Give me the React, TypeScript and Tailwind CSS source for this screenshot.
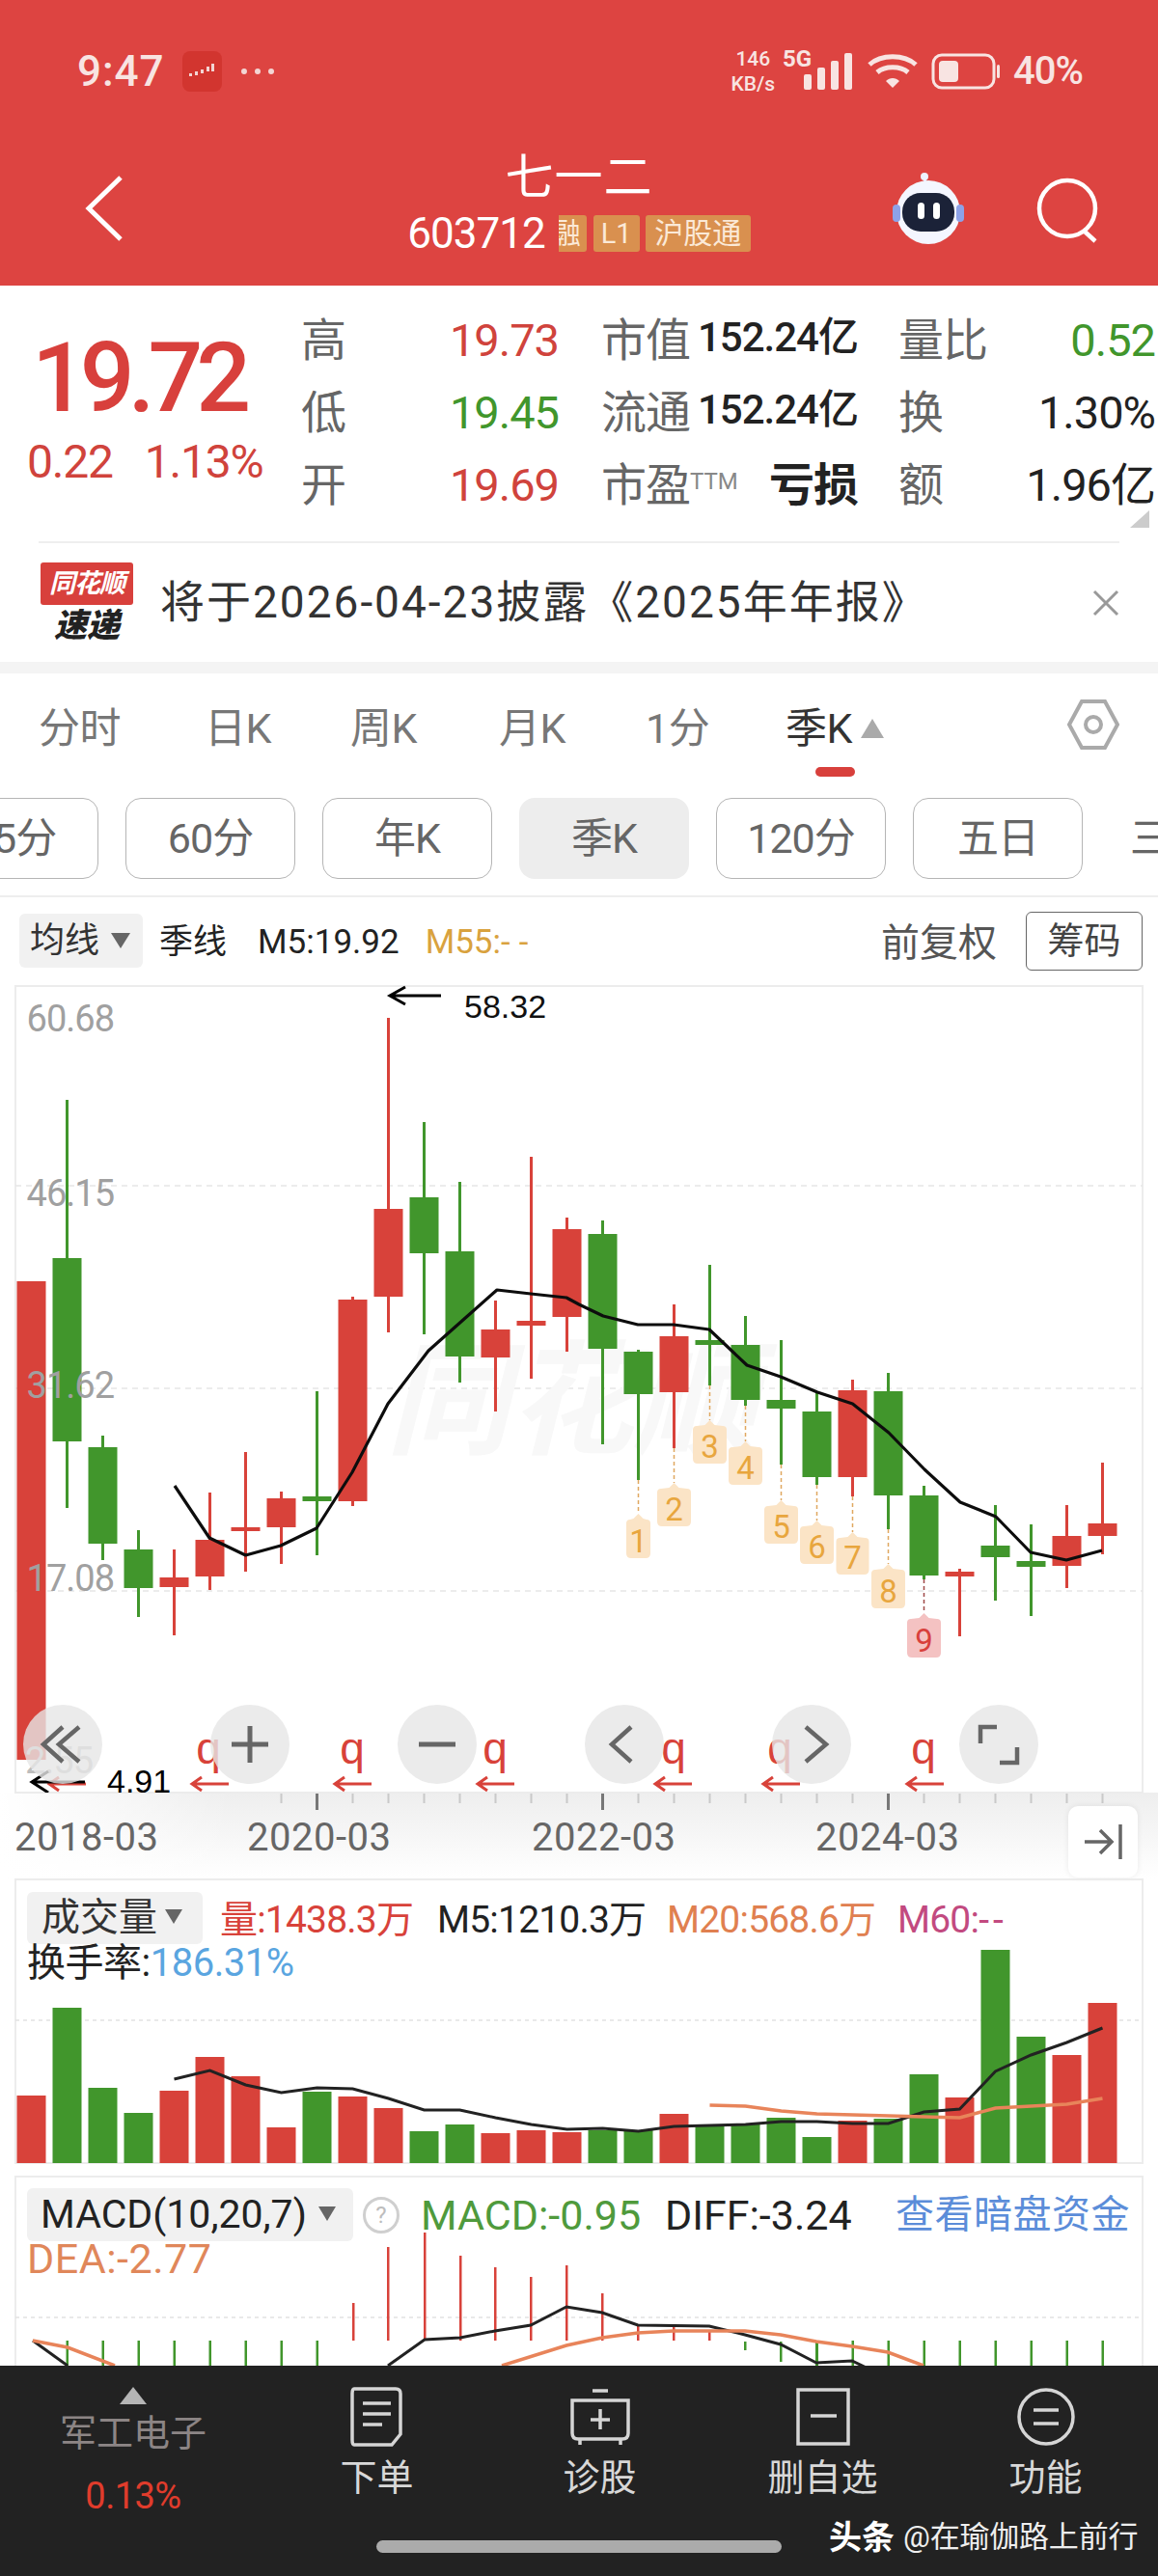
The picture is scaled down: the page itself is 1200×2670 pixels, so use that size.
import React from 'react';

const FONT = "Roboto, 'Noto Sans CJK SC', sans-serif";
const RED = '#d8423a';
const GREEN = '#41962c';

const cx = (i: number) => 32.5 + 37 * i;

// [wickTop, bodyTop, bodyBottom, wickBottom, 'r' | 'g']
const candles: [number, number, number, number, string][] = [
  [1328, 1328, 1824, 1824, 'r'],
  [1140, 1304, 1494, 1563, 'g'],
  [1488, 1500, 1600, 1617, 'g'],
  [1586, 1606, 1646, 1676, 'g'],
  [1606, 1635, 1645, 1695, 'r'],
  [1547, 1596, 1634, 1648, 'r'],
  [1505, 1583, 1587, 1629, 'r'],
  [1546, 1553, 1583, 1621, 'r'],
  [1442, 1551, 1556, 1612, 'g'],
  [1344, 1347, 1556, 1561, 'r'],
  [1055, 1253, 1344, 1381, 'r'],
  [1163, 1241, 1299, 1383, 'g'],
  [1225, 1297, 1406, 1433, 'g'],
  [1348, 1378, 1407, 1463, 'r'],
  [1199, 1369, 1374, 1429, 'r'],
  [1262, 1274, 1365, 1401, 'r'],
  [1265, 1279, 1398, 1497, 'g'],
  [1399, 1401, 1445, 1534, 'g'],
  [1352, 1385, 1443, 1501, 'r'],
  [1311, 1389, 1394, 1436, 'g'],
  [1364, 1394, 1451, 1457, 'g'],
  [1389, 1451, 1460, 1518, 'g'],
  [1443, 1463, 1531, 1539, 'g'],
  [1430, 1441, 1531, 1551, 'r'],
  [1423, 1442, 1550, 1585, 'g'],
  [1540, 1550, 1633, 1637, 'g'],
  [1626, 1629, 1634, 1696, 'r'],
  [1560, 1602, 1614, 1659, 'g'],
  [1580, 1618, 1624, 1675, 'g'],
  [1560, 1592, 1623, 1646, 'r'],
  [1516, 1579, 1592, 1611, 'r'],
];

const maLine =
  '181,1540 217,1594 254.5,1612 291,1602 328,1584 365,1526 402,1455 444,1400 480,1368 515,1337 550,1341 587,1345 600,1352 625,1364 661,1373 698,1373 735,1378 774,1415 809,1427 847,1443 883.5,1455 921,1485 958,1523 995,1557 1032,1572 1068,1609 1105,1617 1142,1607';

// [center x, peak y, bottom y, width, wick bottom, label]
const markers: [number, number, number, number, number, string][] = [
  [661.5, 1569, 1615, 25, 1534, '1'],
  [698.5, 1537, 1582, 35, 1501, '2'],
  [735.5, 1472, 1517, 35, 1436, '3'],
  [772.5, 1494, 1539, 35, 1457, '4'],
  [809.5, 1555, 1600, 35, 1518, '5'],
  [846.5, 1576, 1621, 35, 1539, '6'],
  [883.5, 1588, 1632, 34, 1551, '7'],
  [920.5, 1621, 1667, 35, 1585, '8'],
  [957.5, 1672, 1718, 35, 1637, '9'],
];

const qArrows: [number, number][] = [
  [216, 198],
  [365, 346],
  [513, 494],
  [698, 678],
  [808, 790],
  [957, 939],
];

const volumes: [number, string][] = [
  [2172, 'r'], [2081, 'g'], [2164, 'g'], [2190, 'g'], [2167, 'r'], [2132, 'r'], [2152, 'r'], [2205, 'r'],
  [2168, 'g'], [2173, 'r'], [2185, 'r'], [2209, 'g'], [2202, 'g'], [2211, 'r'], [2208, 'r'], [2210, 'r'],
  [2208, 'g'], [2208, 'g'], [2191, 'r'], [2203, 'g'], [2202, 'g'], [2195, 'g'], [2215, 'g'], [2198, 'r'],
  [2196, 'g'], [2150, 'g'], [2174, 'r'], [2021, 'g'], [2111, 'g'], [2130, 'r'], [2076, 'r'],
];

const volM5 = [
  2155, 2146, 2161, 2169, 2164, 2165, 2175, 2187, 2187, 2195, 2202, 2207, 2206, 2209, 2204, 2203, 2202, 2199,
  2199, 2201, 2201, 2189, 2186, 2147, 2130, 2117, 2102,
];
const volM20 = [2182, 2183, 2188, 2191, 2192, 2193, 2194, 2195, 2185, 2183, 2181, 2175];

const macdBars: [number, number, string][] = [
  [366, 2387, 'r'], [402, 2329, 'r'], [440, 2314, 'r'], [477, 2338, 'r'], [513, 2350, 'r'], [550, 2360, 'r'],
  [587, 2348, 'r'], [624, 2377, 'r'], [661, 2410, 'r'], [698, 2410, 'r'], [735, 2415, 'r'],
];

const Tab = ({ label, active }: { label: string; active?: boolean }) => (
  <span className={active ? 'text-[#333]' : 'text-[#777]'}>{label}</span>
);

const PeriodBtn = ({ label, active }: { label: string; active?: boolean }) => (
  <div
    className={
      'w-[176px] h-[84px] shrink-0 rounded-[16px] flex items-center justify-center text-[43px] tracking-[-1px] text-[#666] ' +
      (active ? 'bg-[#ededed]' : 'border border-[#b5b5b5]')
    }
  >
    {label}
  </div>
);

const RoundBtn = ({ left, children }: { left: string; children: React.ReactNode }) => (
  <div className={'absolute top-0 w-[82px] h-[82px] rounded-full bg-[#e6e6e6]/80 ' + left}>
    <svg width="82" height="82" viewBox="0 0 82 82" fill="none" stroke="#666" strokeWidth="4.5">
      {children}
    </svg>
  </div>
);

const NavItem = ({ label, children }: { label: string; children: React.ReactNode }) => (
  <div className="w-[231px] flex flex-col items-center">
    <svg width="70" height="62" viewBox="0 0 70 62" fill="none" stroke="#d5d5d5" strokeWidth="3.5">
      {children}
    </svg>
    <span className="mt-[8px] text-[38px] leading-[48px] text-[#d8d8d8]">{label}</span>
  </div>
);

export default function App() {
  return (
    <div className="relative w-[1200px] h-[2670px] overflow-hidden bg-white" style={{ fontFamily: FONT }}>
      {/* header */}
      <header className="relative h-[296px] bg-[#dd4441] text-white">
        <div className="flex items-center h-[148px] pl-[80px] pr-[78px]">
          <span className="text-[44px] tracking-[1px] font-medium text-[#f8e4e2]">9:47</span>
          <div className="ml-[18px] w-[41px] h-[42px] rounded-[8px] bg-[#d2352f] flex items-center justify-center">
            <svg width="28" height="16" viewBox="0 0 28 16" fill="#f3d5d3">
              <rect x="1" y="10" width="3" height="3" />
              <rect x="7" y="8" width="3" height="4" />
              <rect x="13" y="6" width="3" height="4" />
              <rect x="19" y="3" width="3" height="5" />
              <rect x="24" y="0" width="3" height="8" />
            </svg>
          </div>
          <div className="ml-[20px] flex gap-[8px]">
            <div className="w-[6px] h-[6px] rounded-full bg-[#f3d5d3]" />
            <div className="w-[6px] h-[6px] rounded-full bg-[#f3d5d3]" />
            <div className="w-[6px] h-[6px] rounded-full bg-[#f3d5d3]" />
          </div>
          <div className="ml-auto flex items-center">
            <div className="flex flex-col items-center text-[21px] leading-[26px] font-medium text-[#f8e4e2]">
              <span>146</span>
              <span>KB/s</span>
            </div>
            <div className="relative w-[62px] h-[48px] ml-[8px]">
              <span className="absolute left-0 top-[-7px] text-[24px] font-bold text-[#f8e4e2]">5G</span>
            </div>
            <svg width="50" height="38" viewBox="0 0 50 38" fill="#f8e4e2" className="ml-[-40px]">
              <rect x="0" y="22" width="8" height="16" rx="2" />
              <rect x="14" y="15" width="8" height="23" rx="2" />
              <rect x="28" y="8" width="8" height="30" rx="2" />
              <rect x="42" y="0" width="8" height="38" rx="2" />
            </svg>
            <svg width="54" height="38" viewBox="0 0 54 38" fill="none" stroke="#f8e4e2" strokeWidth="5" className="ml-[15px]">
              <path d="M3 12 C15 1 39 1 51 12" />
              <path d="M11 20 C19 13 35 13 43 20" />
              <path d="M20 29 L27 36 L34 29 C30 25 24 25 20 29 Z" fill="#f8e4e2" stroke="none" />
            </svg>
            <svg width="72" height="38" viewBox="0 0 72 38" fill="none" className="ml-[13px]">
              <rect x="2" y="2" width="63" height="34" rx="9" stroke="#f8e4e2" strokeWidth="3" />
              <rect x="8" y="8" width="20" height="22" rx="4" fill="#f8e4e2" />
              <rect x="68" y="12" width="3" height="14" rx="1.5" fill="#f8e4e2" />
            </svg>
            <span className="ml-[13px] text-[40px] font-medium tracking-[-1px] text-[#f8e4e2]">40%</span>
          </div>
        </div>
        <div className="absolute left-[88px] top-[182px]">
          <svg width="40" height="68" viewBox="0 0 40 68" fill="none" stroke="#fff" strokeWidth="5">
            <path d="M37 2 L4 34 L37 66" />
          </svg>
        </div>
        <div className="flex flex-col items-center mt-[1px]">
          <span className="text-[50px] leading-[70px] tracking-[1px]">七一二</span>
          <div className="flex items-center mt-[3px] h-[40px]">
            <span className="text-[44px] tracking-[-1px] mr-[14px]">603712</span>
            <div className="w-[29px] h-[38px] overflow-hidden bg-[#d9904f] rounded-r-[3px] flex justify-end">
              <span className="text-[30px] leading-[38px] text-[#fbe9d7] shrink-0 mr-[6px]">融</span>
            </div>
            <div className="ml-[7px] w-[48px] h-[38px] bg-[#d9904f] rounded-[3px] text-center text-[29px] leading-[38px] text-[#fbe9d7]">
              L1
            </div>
            <div className="ml-[6px] w-[109px] h-[38px] bg-[#d9904f] rounded-[3px] text-center text-[30px] leading-[38px] text-[#fbe9d7]">
              沪股通
            </div>
          </div>
        </div>
        <svg className="absolute left-[922px] top-[178px]" width="80" height="76" viewBox="0 0 80 76">
          <line x1="36" y1="6" x2="38" y2="16" stroke="#dfe7ff" strokeWidth="3" />
          <circle cx="36" cy="5" r="4" fill="#eef2ff" />
          <circle cx="40" cy="42" r="33" fill="#f4f6ff" />
          <rect x="3" y="34" width="8" height="18" rx="4" fill="#8da2e8" />
          <rect x="69" y="34" width="8" height="18" rx="4" fill="#8da2e8" />
          <rect x="13" y="22" width="54" height="40" rx="19" fill="#1b2238" />
          <rect x="29" y="32" width="7" height="17" rx="3.5" fill="#fff" />
          <rect x="45" y="32" width="7" height="17" rx="3.5" fill="#fff" />
        </svg>
        <svg className="absolute left-[1073px] top-[184px]" width="70" height="68" viewBox="0 0 70 68" fill="none" stroke="#fff" strokeWidth="4.5">
          <circle cx="33" cy="32" r="29" />
          <path d="M50 55 L62 66" />
        </svg>
      </header>

      {/* quote */}
      <section className="relative h-[267px]">
        <div className="absolute left-[33px] top-[46px] text-[100px] leading-[100px] font-medium tracking-[-7px] text-[#d8403c]">19.72</div>
        <div className="absolute left-[28px] top-[155px] flex gap-[33px] text-[48px] leading-[56px] tracking-[-1.2px] text-[#d0433c]">
          <span>0.22</span>
          <span>1.13%</span>
        </div>
        <div className="absolute left-[312px] top-[20px] w-[888px] grid grid-rows-3 grid-cols-[267px_310px_1fr] h-[225px] text-[47px] tracking-[-1px] items-center text-[#666]">
          <div className="flex justify-between"><span>高</span><span className="text-[#d0433c]">19.73</span></div>
          <div className="pl-[44px] flex justify-between"><span>市值</span><span className="text-[#222] text-[42px] font-medium tracking-[-1px]">152.24亿</span></div>
          <div className="pl-[42px] flex justify-between"><span>量比</span><span className="text-[#41962c] pr-[3px]">0.52</span></div>
          <div className="flex justify-between"><span>低</span><span className="text-[#41962c]">19.45</span></div>
          <div className="pl-[44px] flex justify-between"><span>流通</span><span className="text-[#222] text-[42px] font-medium tracking-[-1px]">152.24亿</span></div>
          <div className="pl-[42px] flex justify-between"><span>换</span><span className="text-[#222] pr-[3px]">1.30%</span></div>
          <div className="flex justify-between"><span>开</span><span className="text-[#d0433c]">19.69</span></div>
          <div className="pl-[44px] flex justify-between">
            <span>市盈<sup className="text-[24px] text-[#888] tracking-normal">TTM</sup></span>
            <span className="text-[#222] font-bold">亏损</span>
          </div>
          <div className="pl-[42px] flex justify-between"><span>额</span><span className="text-[#222] pr-[3px]">1.96亿</span></div>
        </div>
        <div className="absolute left-[1171px] top-[233px] w-0 h-0 border-b-[18px] border-l-[20px] border-b-[#ccc] border-l-transparent" />
        <div className="absolute left-[40px] right-[40px] bottom-0 h-[2px] bg-[#eeeeee]" />
      </section>

      {/* notice */}
      <section className="relative h-[123px] flex items-center pl-[42px] pr-[40px]">
        <div className="w-[96px] flex flex-col items-center">
          <div className="w-[96px] h-[44px] bg-[#d8403c] rounded-[3px] text-white text-[27px] leading-[44px] font-bold italic text-center tracking-[-1px]">同花顺</div>
          <div className="mt-[2px] text-[34px] leading-[38px] font-black italic text-[#222]">速递</div>
        </div>
        <span className="ml-[28px] text-[46px] tracking-[2px] text-[#333]">将于2026-04-23披露《2025年年报》</span>
        <svg className="ml-auto" width="28" height="28" viewBox="0 0 28 28" stroke="#999" strokeWidth="3">
          <path d="M2 2 L26 26 M26 2 L2 26" />
        </svg>
      </section>
      <div className="h-[12px] bg-[#f4f4f4]" />

      {/* period tabs */}
      <section className="relative h-[112px] text-[43px] tracking-[-0.5px]">
        <div className="absolute left-[40px] top-[25px] flex items-center">
          <div className="w-[172px]"><Tab label="分时" /></div>
          <div className="w-[151px]"><Tab label="日K" /></div>
          <div className="w-[154px]"><Tab label="周K" /></div>
          <div className="w-[152px]"><Tab label="月K" /></div>
          <div className="w-[145px]"><Tab label="1分" /></div>
          <Tab label="季K" active />
          <div className="ml-[9px] w-0 h-0 border-x-[12px] border-b-[20px] border-x-transparent border-b-[#aaa]" />
        </div>
        <div className="absolute left-[845px] top-[97px] w-[41px] h-[10px] rounded-full bg-[#d8403c]" />
        <svg className="absolute left-[1106px] top-[26px]" width="54" height="54" viewBox="0 0 54 54" fill="none" stroke="#aaa" strokeWidth="4">
          <path d="M15 3 H39 L52 27 L39 51 H15 L2 27 Z" />
          <circle cx="27" cy="27" r="8" />
        </svg>
      </section>

      <section className="relative h-[120px] border-b-2 border-[#eeeeee] overflow-hidden">
        <div className="absolute left-[-74px] top-[17px] flex gap-[28px]">
          <PeriodBtn label="15分" />
          <PeriodBtn label="60分" />
          <PeriodBtn label="年K" />
          <PeriodBtn label="季K" active />
          <PeriodBtn label="120分" />
          <PeriodBtn label="五日" />
          <span className="ml-[21px] text-[43px] leading-[84px] text-[#666]">三</span>
        </div>
      </section>

      {/* legend row */}
      <section className="h-[91px] relative">
        <div className="absolute left-[20px] top-[17px] h-[56px] w-[128px] rounded-[6px] bg-[#f1f1f1] flex items-center pl-[11px] text-[36px] text-[#333]">
          均线
          <span className="ml-[12px] w-0 h-0 border-x-[10px] border-t-[16px] border-x-transparent border-t-[#666]" />
        </div>
        <div className="absolute left-[165px] top-[22px] flex items-center text-[35px] leading-[50px] text-[#222]">
          季线
          <span className="ml-[32px]">M5:19.92</span>
          <span className="ml-[27px] text-[#d9a23e]">M55:<span className="tracking-[9px]">--</span></span>
        </div>
        <span className="absolute left-[913px] top-[20px] text-[40px] leading-[56px] text-[#555]">前复权</span>
        <div className="absolute left-[1063px] top-[15px] w-[121px] h-[61px] border border-[#666] rounded-[6px] text-center text-[38px] leading-[58px] text-[#444]">筹码</div>
      </section>

      {/* kline chart */}
      <section className="relative h-[926px]">
        <svg width="1200" height="926" viewBox="0 1021 1200 926" className="block" fontFamily={FONT}>
          <defs>
            <linearGradient id="band" x1="0" y1="0" x2="0" y2="1">
              <stop offset="0" stopColor="#eeeeee" />
              <stop offset="1" stopColor="#ffffff" />
            </linearGradient>
            <linearGradient id="fade" x1="0" y1="0" x2="1" y2="0">
              <stop offset="0" stopColor="#ffffff" />
              <stop offset="1" stopColor="#ffffff" stopOpacity="0" />
            </linearGradient>
            <clipPath id="plot">
              <rect x="15" y="1021" width="1170" height="837" />
            </clipPath>
          </defs>
          <rect x="0" y="1858" width="1200" height="89" fill="url(#band)" />
          <rect x="0" y="1858" width="240" height="89" fill="url(#fade)" />
          <rect x="16" y="1022" width="1168" height="836" fill="none" stroke="#ececec" strokeWidth="2" />
          {[1229, 1439, 1649].map(y => (
            <line key={y} x1="16" x2="1184" y1={y} y2={y} stroke="#e6e6e6" strokeWidth="1.5" strokeDasharray="6 5" />
          ))}
          <text x="400" y="1497" fontSize="128" fontWeight="700" fontStyle="italic" fill="#f8f8f8">同花顺</text>

          {candles.map((c, i) => {
            const color = c[4] === 'r' ? RED : GREEN;
            return (
              <g key={i} fill={color}>
                <rect x={cx(i) - 1.5} y={c[0]} width="3" height={c[3] - c[0]} />
                <rect x={cx(i) - 15} y={c[1]} width="30" height={c[2] - c[1]} />
              </g>
            );
          })}
          <g fill="#a0a0a0" fontSize="38" textAnchor="end" letterSpacing="-1">
            <text x="118" y="1069">60.68</text>
            <text x="118" y="1250">46.15</text>
            <text x="118" y="1449">31.62</text>
            <text x="118" y="1649">17.08</text>
          </g>
          <text x="96" y="1838" textAnchor="end" fontSize="38" letterSpacing="-1" fill="#bdbdbd">2.55</text>
          <polyline points={maLine} fill="none" stroke="#0d0d0d" strokeWidth="3.2" strokeLinejoin="round" />

          {markers.map(([x, peak, bottom, w, wick, label], i) => {
            const last = i === 8;
            const hw = w / 2;
            return (
              <g key={label}>
                <line x1={x} x2={x} y1={wick} y2={peak} stroke={last ? '#a04a48' : '#e0a860'} strokeWidth="1.5" strokeDasharray="4 3" />
                <path
                  d={`M${x} ${peak} L${x + 5} ${peak + 5} L${x + hw - 4} ${peak + 6} Q${x + hw} ${peak + 6} ${x + hw} ${peak + 10} L${x + hw} ${bottom - 5} Q${x + hw} ${bottom} ${x + hw - 5} ${bottom} L${x - hw + 5} ${bottom} Q${x - hw} ${bottom} ${x - hw} ${bottom - 5} L${x - hw} ${peak + 10} Q${x - hw} ${peak + 6} ${x - hw + 4} ${peak + 6} L${x - 5} ${peak + 5} Z`}
                  fill={last ? '#f4c2c2' : '#fbe4c6'}
                />
                <text x={x} y={bottom - 6} textAnchor="middle" fontSize="33" fill={last ? '#d8403c' : '#e8a63e'}>
                  {label}
                </text>
              </g>
            );
          })}

          <g clipPath="url(#plot)">
            {qArrows.map(([qx, ax]) => (
              <g key={qx}>
                <text x={qx} y="1828" textAnchor="middle" fontSize="46" fill={RED} fontFamily="'Liberation Sans', sans-serif">q</text>
                <path d={`M${ax + 39} 1849 H${ax + 1} M${ax + 11} 1842 L${ax + 1} 1849 L${ax + 11} 1856`} fill="none" stroke={RED} strokeWidth="3" />
              </g>
            ))}
            <path d="M89 1849 H51 M61 1842 L51 1849 L61 1856" fill="none" stroke={RED} strokeWidth="3" />
            <path d="M88 1847 H33 M50 1836 L33 1847 L50 1858" fill="none" stroke="#000" strokeWidth="3" />
            <text x="111" y="1858" fontSize="34" fill="#000" fontFamily="'Liberation Sans', sans-serif">4.91</text>
          </g>
          <path d="M457 1032 H404 M420 1023 L404 1032 L420 1041" fill="none" stroke="#000" strokeWidth="3" />
          <text x="481" y="1055" fontSize="34" fill="#111" fontFamily="'Liberation Sans', sans-serif">58.32</text>

          {candles.slice(7).map((_, i) => {
            const x = cx(i + 7);
            const major = i + 7 === 8 || i + 7 === 16 || i + 7 === 24;
            return (
              <line key={i} x1={x} x2={x} y1="1859" y2={major ? 1876 : 1869} stroke={major ? '#777' : '#c9c9c9'} strokeWidth={major ? 3 : 2} />
            );
          })}
          <g fontSize="40" fill="#666" letterSpacing="0.5">
            <text x="15" y="1918">2018-03</text>
            <text x="256" y="1918">2020-03</text>
            <text x="551" y="1918">2022-03</text>
            <text x="845" y="1918">2024-03</text>
          </g>
        </svg>

        <div className="absolute left-0 top-[746px] w-full h-[82px]">
          <RoundBtn left="left-[24px]">
            <path d="M41 23 L21 41 L41 59 M58 23 L37 41 L58 59" />
          </RoundBtn>
          <RoundBtn left="left-[218px]">
            <path d="M41 22 V60 M22 41 H60" strokeWidth="5" />
          </RoundBtn>
          <RoundBtn left="left-[412px]">
            <path d="M22 41 H60" strokeWidth="5" />
          </RoundBtn>
          <RoundBtn left="left-[606px]">
            <path d="M48 23 L28 41 L48 59" />
          </RoundBtn>
          <RoundBtn left="left-[800px]">
            <path d="M35 23 L56 41 L35 59" />
          </RoundBtn>
          <RoundBtn left="left-[994px]">
            <path d="M22 40 V23 H39 M60 44 V60 H42" />
          </RoundBtn>
        </div>
        <div className="absolute left-[1107px] top-[851px] w-[72px] h-[74px] rounded-[10px] bg-white shadow-[0_0_6px_rgba(0,0,0,0.08)] flex items-center justify-center">
          <svg width="40" height="38" viewBox="0 0 40 38" fill="none" stroke="#666" strokeWidth="3.5">
            <path d="M1 19 H28 M17 7 L29 19 L17 31 M38 1 V37" />
          </svg>
        </div>
      </section>

      {/* volume */}
      <section className="relative h-[308px]">
        <svg width="1200" height="308" viewBox="0 1947 1200 308" className="block">
          <rect x="16" y="1948" width="1168" height="294" fill="none" stroke="#ececec" strokeWidth="2" />
          <line x1="16" x2="1184" y1="2094" y2="2094" stroke="#e2e2e2" strokeWidth="1.5" strokeDasharray="4 4" />
          {volumes.map(([top, c], i) => (
            <rect key={i} x={cx(i) - 15} y={top} width="30" height={2242 - top} fill={c === 'r' ? RED : GREEN} />
          ))}
          <polyline points={volM5.map((y, i) => `${cx(i + 4)},${y}`).join(' ')} fill="none" stroke="#222" strokeWidth="3" />
          <polyline points={volM20.map((y, i) => `${cx(i + 19)},${y}`).join(' ')} fill="none" stroke="#e8845a" strokeWidth="3.5" />
        </svg>
        <div className="absolute left-[28px] top-[14px] h-[54px] w-[182px] rounded-[6px] bg-[#f1f1f1] flex items-center pl-[15px] text-[40px] text-[#333]">
          成交量
          <span className="ml-[8px] mb-[4px] w-0 h-0 border-x-[9px] border-t-[15px] border-x-transparent border-t-[#666]" />
        </div>
        <div className="absolute left-[228px] top-[20px] flex text-[39px] leading-[46px] tracking-[-0.8px] whitespace-nowrap">
          <span className="w-[225px] text-[#d8423a]">量:1438.3万</span>
          <span className="w-[238px] text-[#222]">M5:1210.3万</span>
          <span className="w-[239px] text-[#e08050]">M20:568.6万</span>
          <span className="text-[#c24a80]">M60:<span className="tracking-[4px]">--</span></span>
        </div>
        <div className="absolute left-[28px] top-[65px] flex text-[40px] leading-[46px] tracking-[-0.5px] text-[#222]">
          换手率:<span className="text-[#5aa5e0]">186.31%</span>
        </div>
      </section>

      {/* macd */}
      <section className="relative h-[197px] overflow-hidden">
        <svg width="1200" height="197" viewBox="0 2255 1200 197" className="block">
          <rect x="16" y="2256" width="1168" height="210" fill="none" stroke="#ececec" strokeWidth="2" />
          <line x1="16" x2="1184" y1="2402" y2="2402" stroke="#e2e2e2" strokeWidth="1.5" strokeDasharray="4 4" />
          {[1, 2, 3, 4, 5, 6, 7, 8, 22, 23, 24, 25, 26, 27, 28, 29, 30].map(i => (
            <rect key={i} x={cx(i) - 1} y="2426" width="2.5" height="30" fill={GREEN} />
          ))}
          <rect x="771" y="2427" width="2.5" height="9" fill={GREEN} />
          <rect x="808" y="2427" width="2.5" height="21" fill={GREEN} />
          <rect x="845" y="2427" width="2.5" height="30" fill={GREEN} />
          {macdBars.map(([x, top]) => (
            <rect key={x} x={x - 1} y={top} width="2.5" height={2426 - top} fill={RED} />
          ))}
          <polyline points="34,2426 70,2452" fill="none" stroke="#222" strokeWidth="3" />
          <polyline points="402,2452 440,2425 477,2423 513,2416 550,2410 587,2391 624,2397 661,2410 735,2411 772,2420 809,2430 846,2449 883,2447 910,2460" fill="none" stroke="#222" strokeWidth="3" />
          <polyline points="34,2426 70,2433 119,2452" fill="none" stroke="#e8845a" strokeWidth="3.5" />
          <polyline points="520,2452 587,2431 624,2423 661,2418 698,2416 735,2416 772,2416 809,2420 846,2427 883,2432 920,2438 957,2452" fill="none" stroke="#e8845a" strokeWidth="3.5" />
        </svg>
        <div className="absolute left-[28px] top-[13px] h-[55px] w-[338px] rounded-[6px] bg-[#f1f1f1] flex items-center pl-[14px] text-[41px] text-[#222] whitespace-nowrap">
          MACD(10,20,7)
          <span className="ml-[12px] mb-[2px] w-0 h-0 border-x-[9px] border-t-[15px] border-x-transparent border-t-[#666]" />
        </div>
        <div className="absolute left-[376px] top-[22px] w-[38px] h-[38px] rounded-full border-[3px] border-[#cfcfcf] text-center text-[24px] leading-[32px] text-[#bdbdbd]">?</div>
        <div className="absolute left-[436px] top-[16px] flex text-[43px] leading-[50px] whitespace-nowrap">
          <span className="w-[253px] text-[#4f9a3c]">MACD:-0.95</span>
          <span className="text-[#222]">DIFF:-3.24</span>
        </div>
        <span className="absolute left-[928px] top-[13px] text-[40px] leading-[56px] tracking-[0.5px] text-[#5b8dd9] whitespace-nowrap">查看暗盘资金</span>
        <span className="absolute left-[28px] top-[61px] text-[43px] leading-[50px] tracking-[0.5px] text-[#e0875a]">DEA:-2.77</span>
      </section>

      {/* bottom bar */}
      <footer className="relative h-[218px] bg-[#222222] flex items-start pt-[22px]">
        <div className="w-[276px] flex flex-col items-center">
          <div className="w-0 h-0 border-x-[14px] border-b-[18px] border-x-transparent border-b-[#b5b5b5]" />
          <span className="mt-[6px] text-[38px] leading-[48px] text-[#8c8585]">军工电子</span>
          <span className="mt-[16px] text-[38px] leading-[50px] tracking-[-0.5px] text-[#e03c2c]">0.13%</span>
        </div>
        <div className="flex -ml-[1px]">
          <NavItem label="下单">
            <path d="M11 2 H54 Q59 2 59 7 V49 L50 60 H11 Q9 60 9 55 V7 Q9 2 11 2 Z" />
            <path d="M20 17 H49 M20 28 H49 M20 39 H40" />
          </NavItem>
          <NavItem label="诊股">
            <path d="M6 14 H64 V48 Q64 54 58 54 H12 Q6 54 6 48 Z" />
            <path d="M27 4 H43 M35 23 V44 M25 34 H45 M14 55 V60 M56 55 V60" />
          </NavItem>
          <NavItem label="删自选">
            <path d="M9 3 H61 V59 H9 Z" />
            <path d="M22 30 H49" />
          </NavItem>
          <NavItem label="功能">
            <circle cx="35" cy="31" r="28" />
            <path d="M22 24 H48 M22 38 H48" />
          </NavItem>
        </div>
        <div className="absolute left-[390px] top-[181px] w-[420px] h-[13px] rounded-full bg-[#ababab]" />
        <div className="absolute left-[859px] top-[156px] flex items-center text-white whitespace-nowrap">
          <span className="text-[34px] leading-[44px] font-bold">头条</span>
          <span className="ml-[9px] text-[31px] leading-[44px] text-[#eeeeee] tracking-[-0.2px]">@在瑜伽路上前行</span>
        </div>
      </footer>
    </div>
  );
}
